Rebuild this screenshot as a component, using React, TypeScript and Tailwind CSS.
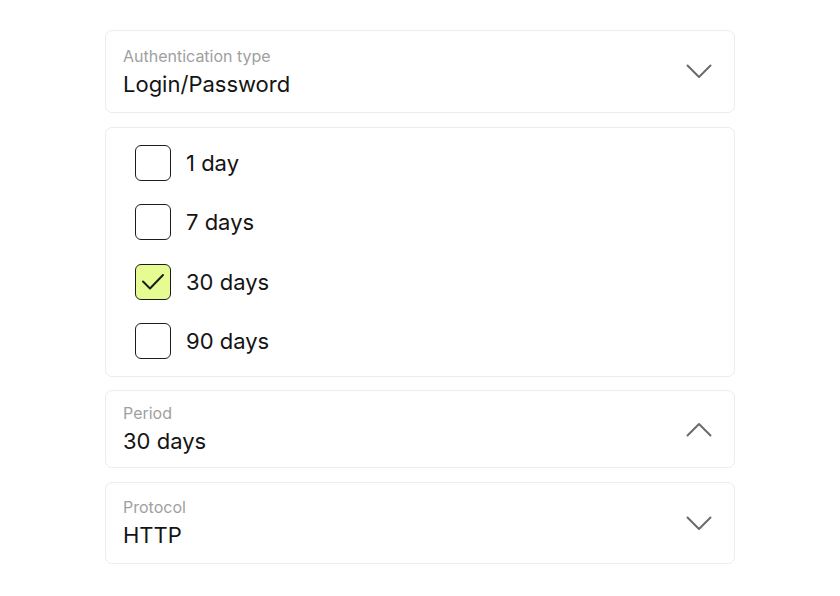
import { useState } from "react";

type Option = { id: string; label: string };

const periodOptions: Option[] = [
  { id: "1", label: "1 day" },
  { id: "7", label: "7 days" },
  { id: "30", label: "30 days" },
  { id: "90", label: "90 days" },
];

function Chevron({ up = false }: { up?: boolean }) {
  return (
    <svg width="26" height="15" viewBox="0 0 26 15" fill="none" className="shrink-0">
      <polyline
        points={up ? "1.5,13.5 13,2 24.5,13.5" : "1.5,1.5 13,13 24.5,1.5"}
        stroke="#6b6b6b"
        strokeWidth="2"
        strokeLinecap="round"
        strokeLinejoin="round"
      />
    </svg>
  );
}

function SelectField({
  label,
  value,
  open = false,
  height,
}: {
  label: string;
  value: string;
  open?: boolean;
  height: string;
}) {
  return (
    <div className={`flex ${height} items-center justify-between rounded-[7px] border border-[#ececec] bg-white pl-[17px] pr-[22px]`}>
      <div className="flex flex-col gap-[4px]">
        <span className="text-[16px] leading-[20px] text-[#a0a0a0]">{label}</span>
        <span className="text-[22px] leading-[28px] text-[#141414]">{value}</span>
      </div>
      <Chevron up={open} />
    </div>
  );
}

function Checkbox({ checked }: { checked: boolean }) {
  return (
    <span
      className={`flex h-[36px] w-[36px] shrink-0 items-center justify-center rounded-[6px] border-[1.5px] border-[#1c1c1c] ${
        checked ? "bg-[#e6fc92]" : "bg-white"
      }`}
    >
      {checked && (
        <svg width="24" height="18" viewBox="0 0 24 18" fill="none">
          <polyline points="2,8.5 9,15.5 22,2" stroke="#1c1c1c" strokeWidth="2" strokeLinecap="round" strokeLinejoin="round" />
        </svg>
      )}
    </span>
  );
}

export default function App() {
  const [selected, setSelected] = useState("30");

  return (
    <div className="min-h-screen bg-white px-[105px] pt-[30px] font-['Inter','Liberation_Sans',sans-serif]">
      <div className="flex flex-col">
        <SelectField label="Authentication type" value="Login/Password" height="h-[83px]" />

        <div className="mt-[14px] flex h-[250px] flex-col rounded-[7px] border border-[#ececec] bg-white px-[29px] py-[5px]">
          {periodOptions.map((opt) => (
            <button
              key={opt.id}
              type="button"
              onClick={() => setSelected(opt.id)}
              className="flex h-[60px] items-center gap-[15px] text-left"
            >
              <Checkbox checked={selected === opt.id} />
              <span className="text-[22px] leading-[28px] text-[#141414]">{opt.label}</span>
            </button>
          ))}
        </div>

        <div className="mt-[13px]">
          <SelectField label="Period" value="30 days" open height="h-[78px]" />
        </div>

        <div className="mt-[14px]">
          <SelectField label="Protocol" value="HTTP" height="h-[82px]" />
        </div>
      </div>
    </div>
  );
}
